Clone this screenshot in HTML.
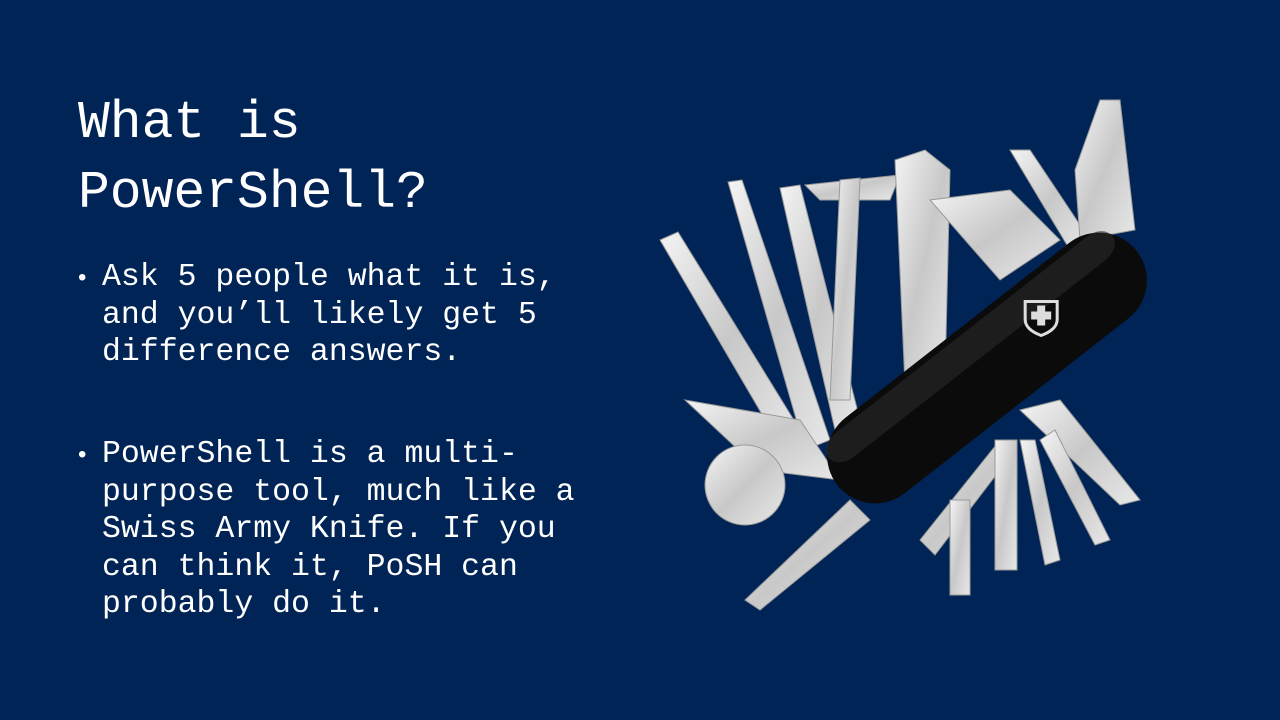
<!DOCTYPE html>
<html><head><style>
html,body{margin:0;padding:0}
body{width:1280px;height:720px;background:#012456;position:relative;overflow:hidden;font-family:"Liberation Mono",monospace;color:#fff}
.t{position:absolute;left:78px;top:88px;font-size:53px;line-height:70px;margin:0;font-weight:normal}
.b{position:absolute;left:102px;font-size:31.5px;line-height:37.5px;width:520px}
.b:before{content:"•";position:absolute;left:-24px;font-family:"Liberation Sans",sans-serif;font-size:24px}
</style></head><body>
<h1 class="t">What is<br>PowerShell?</h1>
<div class="b" style="top:259px">Ask 5 people what it is,<br>and you’ll likely get 5<br>difference answers.</div>
<div class="b" style="top:436px">PowerShell is a multi-<br>purpose tool, much like a<br>Swiss Army Knife. If you<br>can think it, PoSH can<br>probably do it.</div>
<svg style="position:absolute;left:0;top:0" width="1280" height="720">
<defs><linearGradient id="s" x1="0" y1="0" x2="1" y2="1"><stop offset="0" stop-color="#f4f4f4"/><stop offset="0.5" stop-color="#c8c8c8"/><stop offset="1" stop-color="#e8e8e8"/></linearGradient></defs>
<g fill="url(#s)" stroke="#9a9a9a" stroke-width="1">
<polygon points="660,240 678,232 800,430 780,445"/>
<polygon points="728,182 742,180 830,440 805,450"/>
<polygon points="780,188 800,185 860,420 835,430"/>
<polygon points="805,185 900,175 890,200 820,200"/>
<polygon points="840,180 860,178 850,400 830,400"/>
<polygon points="895,160 925,150 950,170 945,380 905,385"/>
<polygon points="930,200 1010,190 1060,240 1000,280"/>
<polygon points="1010,150 1030,150 1090,240 1070,250"/>
<polygon points="1100,100 1120,100 1135,230 1080,240 1075,170"/>
<polygon points="685,400 800,420 840,480 760,470"/>
<circle cx="745" cy="485" r="40"/>
<polygon points="745,600 850,500 870,520 760,610"/>
<polygon points="920,540 1000,440 1015,450 935,555"/>
<polygon points="1020,410 1060,400 1140,500 1120,505"/>
<polygon points="1020,440 1035,440 1060,560 1045,565"/>
<polygon points="1040,440 1055,430 1110,540 1095,545"/>
<rect x="950" y="500" width="20" height="95"/>
<rect x="995" y="440" width="22" height="130"/>
</g>
<g transform="translate(987,368) rotate(-38)">
<rect x="-190" y="-48" width="380" height="96" rx="48" fill="#0b0b0b"/>
<rect x="-180" y="-42" width="360" height="30" rx="20" fill="#2a2a2a" opacity="0.6"/>
<g transform="translate(75,-8) rotate(38)">
<path d="M-16,-14 L16,-14 L16,4 Q16,14 0,20 Q-16,14 -16,4 Z" fill="none" stroke="#ddd" stroke-width="3"/>
<path d="M-4,-10 h8 v6 h6 v8 h-6 v6 h-8 v-6 h-6 v-8 h6 Z" fill="#ddd"/>
</g>
</g>
</svg>
</body></html>
